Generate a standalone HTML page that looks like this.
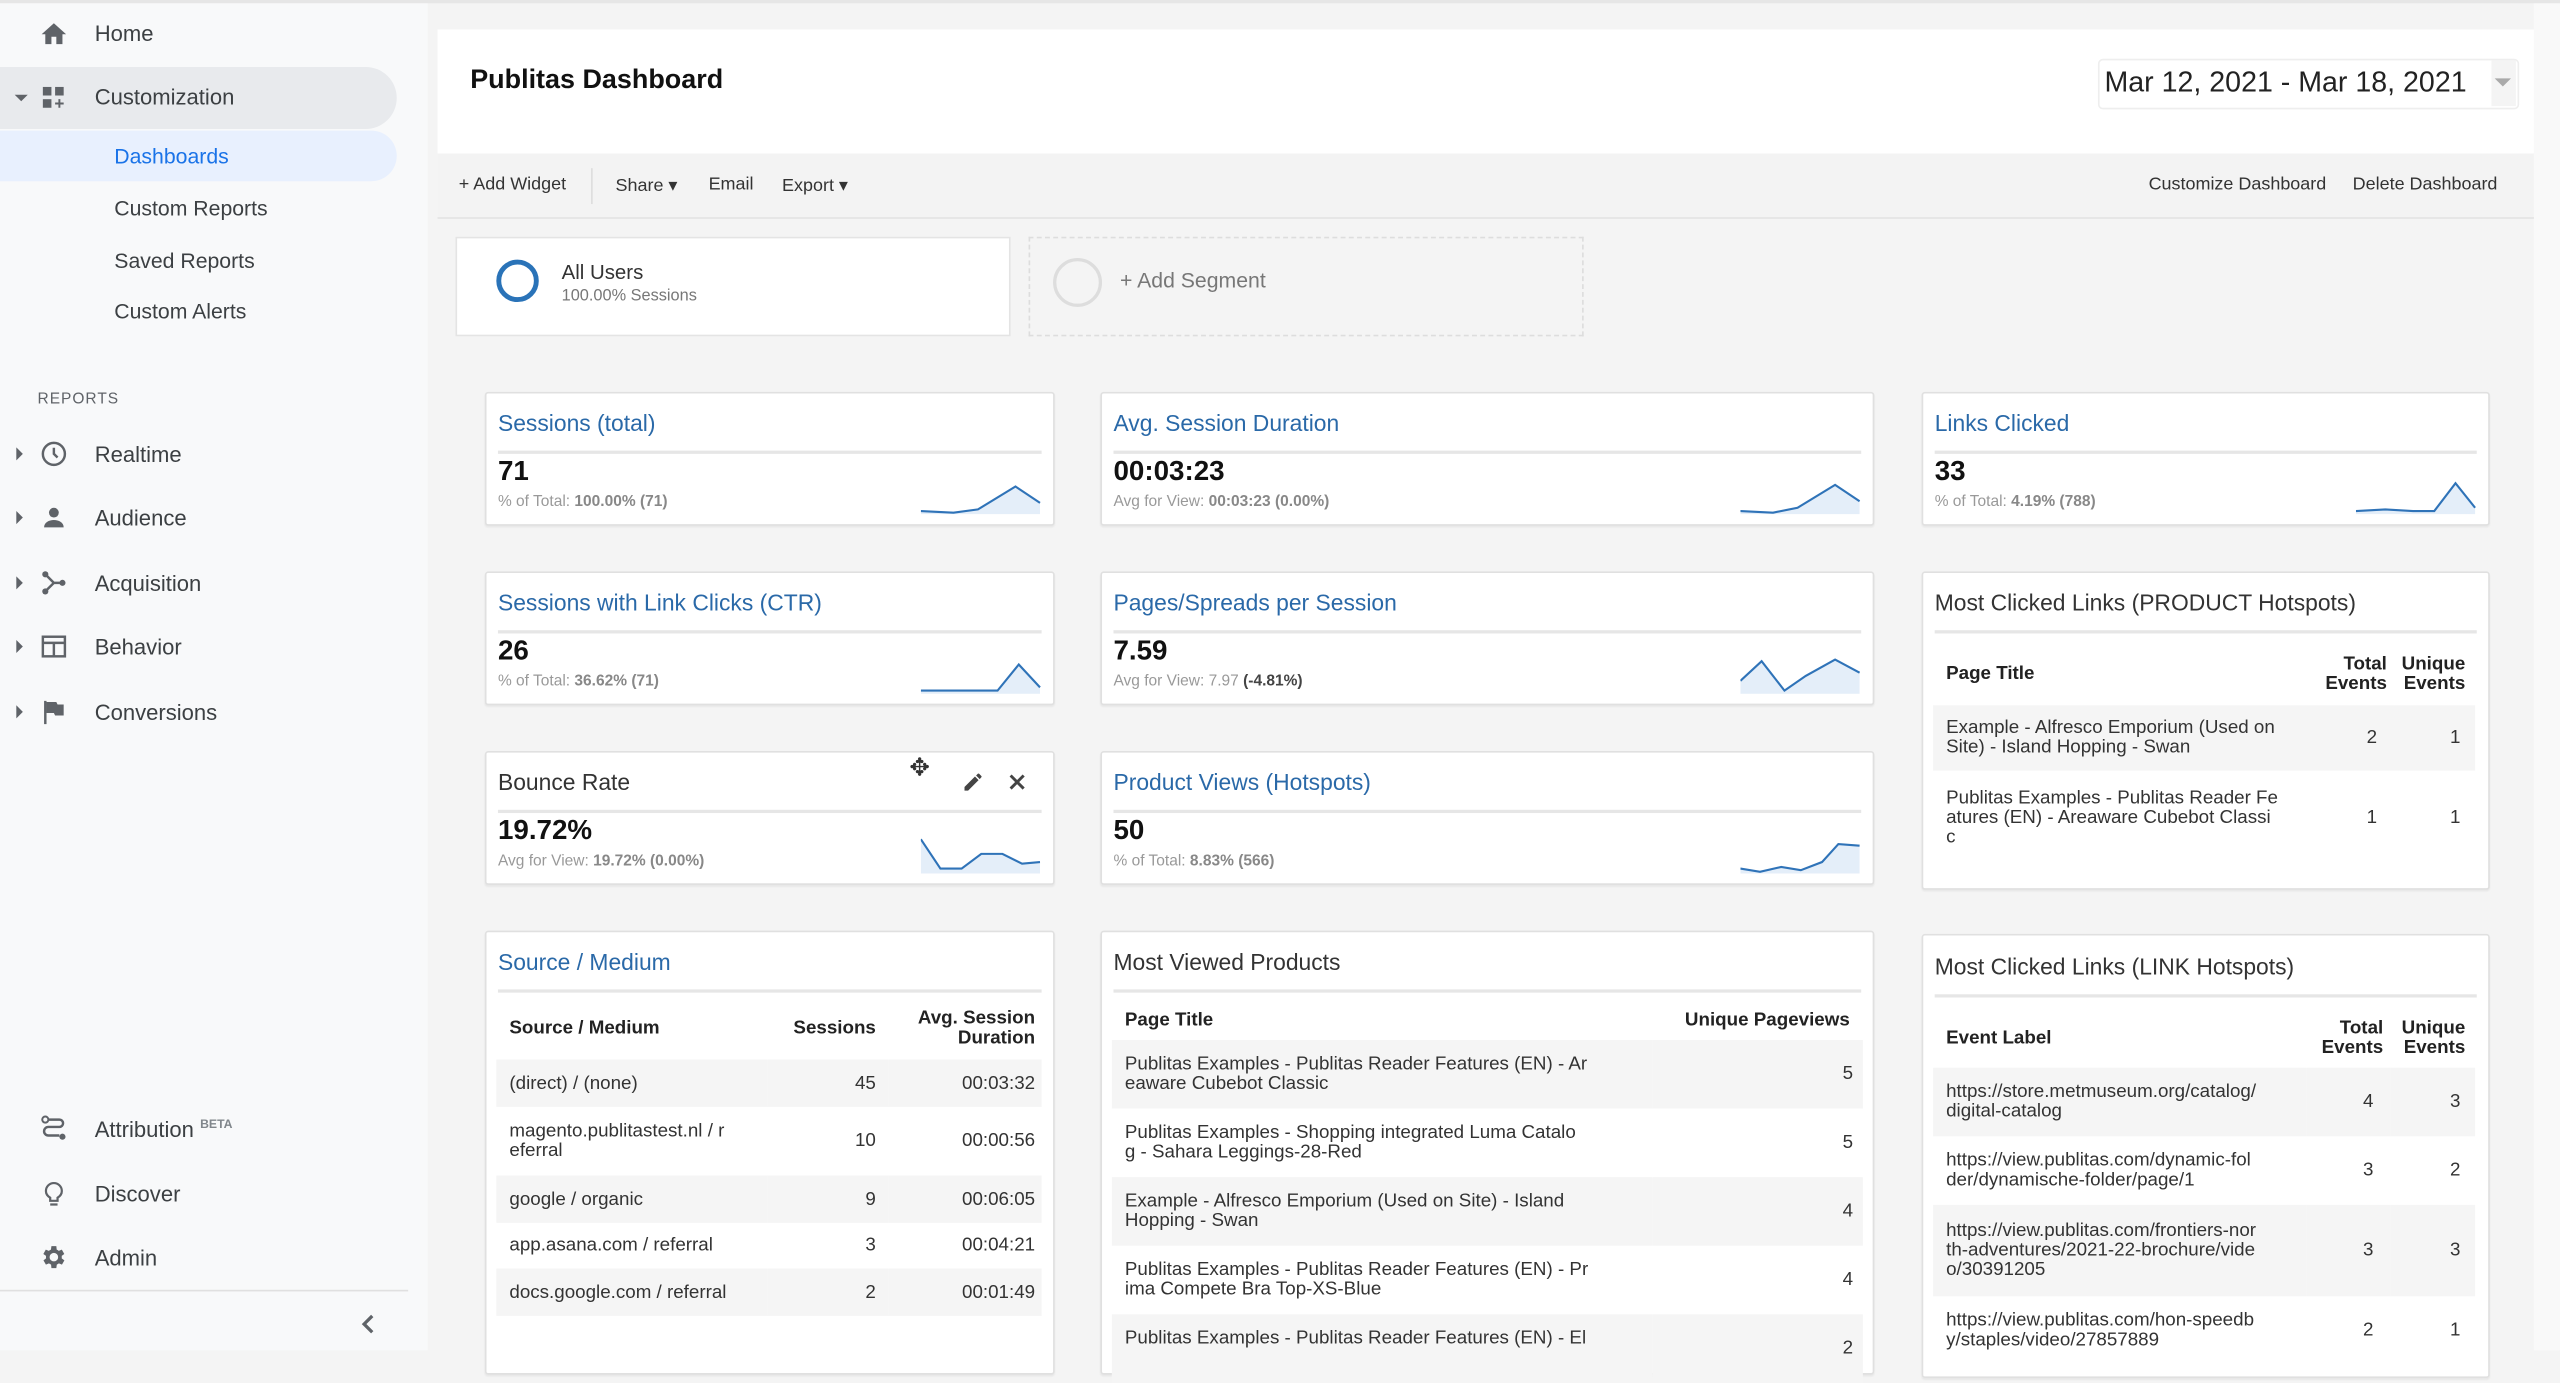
<!DOCTYPE html>
<html><head><meta charset="utf-8"><style>
html,body{margin:0;padding:0;width:2560px;height:1350px;overflow:hidden;background:#f4f4f4;font-family:"Liberation Sans",Arial,sans-serif;}
#w{position:absolute;left:0;top:0;width:1568px;height:827px;transform:scale(1.63265);transform-origin:0 0;background:#f4f4f4;}
.a{position:absolute;white-space:nowrap;}
#side{position:absolute;left:0;top:0;width:262px;height:827px;background:#f8f9fa;}
.nav{position:absolute;left:58px;font-size:13.5px;color:#3c4043;}
.sub{position:absolute;left:70px;font-size:13px;color:#3c4043;}
.ic{position:absolute;left:24px;width:18px;height:18px;}
.tri{position:absolute;left:10px;width:0;height:0;border-top:4px solid transparent;border-bottom:4px solid transparent;border-left:4px solid #5f6368;}
.card{position:absolute;background:#fff;border:1px solid #e0e0e0;border-radius:2px;box-shadow:0 1px 1px rgba(0,0,0,.05);}
.ct{position:absolute;left:7px;top:10px;font-size:14px;color:#2a69a8;}
.ctb{color:#333;}
.hr{position:absolute;left:7px;right:7px;top:35px;height:2px;background:#e6e6e6;}
.val{position:absolute;left:7px;top:38px;font-size:17px;font-weight:bold;color:#111;}
.sm{position:absolute;left:7px;top:61px;font-size:9.5px;color:#999;}
.sm b{color:#888;}
.spark{position:absolute;right:7px;bottom:6px;}
table{border-collapse:collapse;font-size:11.5px;color:#333;}
td,th{padding:0 8px;}
th{font-weight:bold;color:#222;font-size:11.5px;}
tr.g{background:#f5f5f5;}
.tb{position:absolute;font-size:11px;color:#333;top:107px;}
</style></head><body><div id="w">
<div id="side">
 <svg class="ic" style="top:12px" viewBox="0 0 24 24"><path d="M10 20v-6h4v6h5v-8h3L12 3 2 12h3v8z" fill="#5f6368"/></svg>
 <div class="nav" style="top:13px">Home</div>
 <div class="a" style="left:0;top:41px;width:243px;height:38px;background:#e8eaed;border-radius:0 19px 19px 0"></div>
 <div class="a" style="left:9px;top:58px;border-left:4px solid transparent;border-right:4px solid transparent;border-top:4px solid #5f6368"></div>
 <svg class="ic" style="top:51px" viewBox="0 0 24 24"><rect x="3" y="3" width="7" height="7" fill="#5f6368"/><rect x="13" y="3" width="7" height="7" fill="#5f6368"/><rect x="3" y="13" width="7" height="7" fill="#5f6368"/><path d="M16.5 13v7M13 16.5h7" stroke="#5f6368" stroke-width="1.6"/></svg>
 <div class="nav" style="top:52px">Customization</div>
 <div class="a" style="left:0;top:80px;width:243px;height:31px;background:#e8f0fe;border-radius:0 16px 16px 0"></div>
 <div class="sub" style="top:88px;color:#1a73e8">Dashboards</div>
 <div class="sub" style="top:120px">Custom Reports</div>
 <div class="sub" style="top:152px">Saved Reports</div>
 <div class="sub" style="top:183px">Custom Alerts</div>
 <div class="a" style="left:23px;top:239px;font-size:9.5px;color:#5f6368;letter-spacing:.6px">REPORTS</div>
 <div class="tri" style="top:274px"></div>
 <svg class="ic" style="top:269px" viewBox="0 0 24 24"><circle cx="12" cy="12" r="9" fill="none" stroke="#5f6368" stroke-width="2"/><path d="M12 7v5l3 3" stroke="#5f6368" stroke-width="2" fill="none"/></svg>
 <div class="nav" style="top:271px">Realtime</div>
 <div class="tri" style="top:313px"></div>
 <svg class="ic" style="top:308px" viewBox="0 0 24 24"><circle cx="12" cy="8" r="4" fill="#5f6368"/><path d="M4 20c0-4 4-6 8-6s8 2 8 6z" fill="#5f6368"/></svg>
 <div class="nav" style="top:310px">Audience</div>
 <div class="tri" style="top:353px"></div>
 <svg class="ic" style="top:348px" viewBox="0 0 24 24"><circle cx="5" cy="5" r="2.5" fill="#5f6368"/><circle cx="5" cy="19" r="2.5" fill="#5f6368"/><circle cx="19" cy="12" r="2.5" fill="#5f6368"/><path d="M5 5l7 7h7M5 19l7-7" stroke="#5f6368" stroke-width="2" fill="none"/></svg>
 <div class="nav" style="top:350px">Acquisition</div>
 <div class="tri" style="top:392px"></div>
 <svg class="ic" style="top:387px" viewBox="0 0 24 24"><rect x="3" y="4" width="18" height="16" fill="none" stroke="#5f6368" stroke-width="2"/><path d="M3 9h18M12 9v11" stroke="#5f6368" stroke-width="2"/></svg>
 <div class="nav" style="top:389px">Behavior</div>
 <div class="tri" style="top:432px"></div>
 <svg class="ic" style="top:427px" viewBox="0 0 24 24"><path d="M5 3v19" stroke="#5f6368" stroke-width="2"/><path d="M6 4h8l1 2h5v9h-7l-1-2H6z" fill="#5f6368"/></svg>
 <div class="nav" style="top:429px">Conversions</div>
 <svg class="ic" style="top:682px" viewBox="0 0 24 24"><circle cx="5" cy="5" r="2.5" fill="none" stroke="#5f6368" stroke-width="1.6"/><circle cx="19" cy="19" r="2.5" fill="#5f6368"/><path d="M7.5 5h9a3 3 0 0 1 0 6h-9a3.5 3.5 0 0 0 0 7h9" fill="none" stroke="#5f6368" stroke-width="2"/></svg>
 <div class="nav" style="top:684px">Attribution <sup style="font-size:7.5px;color:#80868b;font-weight:bold">BETA</sup></div>
 <svg class="ic" style="top:722px" viewBox="0 0 24 24"><path d="M9 21h6M9 18h6v-2.5c2-1.2 3.5-3.2 3.5-5.5a6.5 6.5 0 0 0-13 0c0 2.3 1.5 4.3 3.5 5.5z" fill="none" stroke="#5f6368" stroke-width="1.8"/></svg>
 <div class="nav" style="top:724px">Discover</div>
 <svg class="ic" style="top:761px" viewBox="0 0 24 24"><path d="M19.4 13a7.5 7.5 0 0 0 0-2l2.1-1.6-2-3.5-2.5 1a7 7 0 0 0-1.7-1L15 3h-4l-.4 2.9a7 7 0 0 0-1.7 1l-2.5-1-2 3.5L6.6 11a7.5 7.5 0 0 0 0 2l-2.1 1.6 2 3.5 2.5-1a7 7 0 0 0 1.7 1L11 21h4l.4-2.9a7 7 0 0 0 1.7-1l2.5 1 2-3.5zM13 15.5a3.5 3.5 0 1 1 0-7 3.5 3.5 0 0 1 0 7z" fill="#5f6368" transform="translate(-1 0)"/></svg>
 <div class="nav" style="top:763px">Admin</div>
 <div class="a" style="left:0;top:790px;width:250px;height:1px;background:#e0e0e0"></div>
 <svg class="a" style="left:219px;top:804px" width="12" height="14" viewBox="0 0 12 14"><path d="M9 2L4 7l5 5" stroke="#5f6368" stroke-width="2" fill="none"/></svg>
</div>
<div class="a" style="left:1552px;top:0;width:16px;height:827px;background:#f9f9f9"></div>
<div class="a" style="left:0;top:0;width:1568px;height:2px;background:#e6e6e6"></div>
<div class="a" style="left:268px;top:18px;width:1284px;height:76px;background:#fff"></div>
<div class="a" style="left:288px;top:40px;font-size:16.5px;font-weight:bold;color:#111">Publitas Dashboard</div>
<div class="a" style="left:1285px;top:36px;width:256px;height:29px;border:1px solid #eee;border-radius:3px;background:#fff"></div>
<div class="a" style="left:1289px;top:40px;font-size:17.5px;color:#222">Mar 12, 2021 - Mar 18, 2021</div>
<div class="a" style="left:1526px;top:37px;width:15px;height:28px;background:#f4f4f4"></div>
<div class="a" style="left:1528px;top:48px;border-left:5px solid transparent;border-right:5px solid transparent;border-top:5px solid #aaa"></div>
<div class="a" style="left:268px;top:94px;width:1284px;height:39px;background:#f3f3f3;border-bottom:1px solid #e3e3e3"></div>
<div class="tb" style="left:281px">+ Add Widget</div>
<div class="a" style="left:362px;top:103px;width:1px;height:22px;background:#ddd"></div>
<div class="tb" style="left:377px">Share ▾</div>
<div class="tb" style="left:434px">Email</div>
<div class="tb" style="left:479px">Export ▾</div>
<div class="tb" style="left:1316px">Customize Dashboard</div>
<div class="tb" style="left:1441px">Delete Dashboard</div>
<div class="a" style="left:279px;top:145px;width:338px;height:59px;background:#fff;border:1px solid #e4e4e4"></div>
<div class="a" style="left:304px;top:159px;width:26px;height:26px;border:3px solid #2a73b8;border-radius:50%;box-sizing:border-box"></div>
<div class="a" style="left:344px;top:160px;font-size:12.5px;color:#333">All Users</div>
<div class="a" style="left:344px;top:176px;font-size:10px;color:#777">100.00% Sessions</div>
<div class="a" style="left:630px;top:145px;width:338px;height:59px;border:1px dashed #ddd"></div>
<div class="a" style="left:645px;top:158px;width:30px;height:30px;border:2px solid #ddd;border-radius:50%;box-sizing:border-box"></div>
<div class="a" style="left:686px;top:164px;font-size:13px;color:#777">+ Add Segment</div>

<div class="card" style="left:297px;top:240px;width:347px;height:80px">
 <div class="ct">Sessions (total)</div><div class="hr"></div><div class="val">71</div>
 <div class="sm">% of Total: <b>100.00% (71)</b></div>
 <svg class="spark" width="74" height="24"><polygon points="0,22 20,23 35,21 58,7 73,17 73,24 0,24" fill="#e4eef9"/><polyline points="0,22 20,23 35,21 58,7 73,17" fill="none" stroke="#2f73b8" stroke-width="1.3"/></svg>
</div>
<div class="card" style="left:674px;top:240px;width:472px;height:80px">
 <div class="ct">Avg. Session Duration</div><div class="hr"></div><div class="val">00:03:23</div>
 <div class="sm">Avg for View: <b>00:03:23 (0.00%)</b></div>
 <svg class="spark" width="74" height="24"><polygon points="0,22 20,23 35,20 58,6 73,16 73,24 0,24" fill="#e4eef9"/><polyline points="0,22 20,23 35,20 58,6 73,16" fill="none" stroke="#2f73b8" stroke-width="1.3"/></svg>
</div>
<div class="card" style="left:1177px;top:240px;width:346px;height:80px">
 <div class="ct">Links Clicked</div><div class="hr"></div><div class="val">33</div>
 <div class="sm">% of Total: <b>4.19% (788)</b></div>
 <svg class="spark" width="74" height="24"><polygon points="0,22 18,21 35,22 48,22 61,5 73,20 73,24 0,24" fill="#e4eef9"/><polyline points="0,22 18,21 35,22 48,22 61,5 73,20" fill="none" stroke="#2f73b8" stroke-width="1.3"/></svg>
</div>
<div class="card" style="left:297px;top:350px;width:347px;height:80px">
 <div class="ct">Sessions with Link Clicks (CTR)</div><div class="hr"></div><div class="val">26</div>
 <div class="sm">% of Total: <b>36.62% (71)</b></div>
 <svg class="spark" width="74" height="24"><polygon points="0,22 20,22 40,22 47,22 60,6 73,20 73,24 0,24" fill="#e4eef9"/><polyline points="0,22 20,22 40,22 47,22 60,6 73,20" fill="none" stroke="#2f73b8" stroke-width="1.3"/></svg>
</div>
<div class="card" style="left:674px;top:350px;width:472px;height:80px">
 <div class="ct">Pages/Spreads per Session</div><div class="hr"></div><div class="val">7.59</div>
 <div class="sm">Avg for View: 7.97 <b style="color:#444">(-4.81%)</b></div>
 <svg class="spark" width="74" height="24"><polygon points="0,16 13,4 27,22 40,13 58,3 73,11 73,24 0,24" fill="#e4eef9"/><polyline points="0,16 13,4 27,22 40,13 58,3 73,11" fill="none" stroke="#2f73b8" stroke-width="1.3"/></svg>
</div>
<div class="card" style="left:297px;top:460px;width:347px;height:80px">
 <div class="ct ctb">Bounce Rate</div><div class="hr"></div><div class="val">19.72%</div>
 <div class="sm">Avg for View: <b>19.72% (0.00%)</b></div>
 <div class="a" style="left:259px;top:0px;font-size:15px;color:#333">✥</div>
 <svg class="a" style="left:291px;top:11px" width="14" height="14" viewBox="0 0 24 24"><path d="M3 17.2V21h3.8L17.8 10l-3.8-3.8zM20.7 7c.4-.4.4-1 0-1.4l-2.3-2.3c-.4-.4-1-.4-1.4 0l-1.8 1.8 3.8 3.8z" fill="#444"/></svg>
 <svg class="a" style="left:319px;top:12px" width="12" height="12" viewBox="0 0 12 12"><path d="M2 2l8 8M10 2l-8 8" stroke="#444" stroke-width="1.8"/></svg>
 <svg class="spark" width="74" height="24"><polygon points="0,3 12,21 25,21 37,12 50,12 62,18 73,17 73,24 0,24" fill="#e4eef9"/><polyline points="0,3 12,21 25,21 37,12 50,12 62,18 73,17" fill="none" stroke="#2f73b8" stroke-width="1.3"/></svg>
</div>
<div class="card" style="left:674px;top:460px;width:472px;height:80px">
 <div class="ct">Product Views (Hotspots)</div><div class="hr"></div><div class="val">50</div>
 <div class="sm">% of Total: <b>8.83% (566)</b></div>
 <svg class="spark" width="74" height="24"><polygon points="0,21 12,23 25,20 37,22 50,17 60,6 73,7 73,24 0,24" fill="#e4eef9"/><polyline points="0,21 12,23 25,20 37,22 50,17 60,6 73,7" fill="none" stroke="#2f73b8" stroke-width="1.3"/></svg>
</div>

<div class="card" style="left:1177px;top:350px;width:346px;height:193px">
 <div class="ct ctb">Most Clicked Links (PRODUCT Hotspots)</div><div class="hr"></div>
 <table class="a" style="left:6px;top:43px;width:332px">
  <tr style="height:38px"><th style="text-align:left">Page Title</th><th style="text-align:right;padding:0 4px">Total<br>Events</th><th style="text-align:right;padding:0 6px 0 2px">Unique<br>Events</th></tr>
  <tr class="g" style="height:40px"><td>Example - Alfresco Emporium (Used on<br>Site) - Island Hopping - Swan</td><td style="text-align:right;padding-right:10px">2</td><td style="text-align:right;padding-right:9px">1</td></tr>
  <tr style="height:58px"><td>Publitas Examples - Publitas Reader Fe<br>atures (EN) - Areaware Cubebot Classi<br>c</td><td style="text-align:right;padding-right:10px">1</td><td style="text-align:right;padding-right:9px">1</td></tr>
 </table>
</div>

<div class="card" style="left:297px;top:570px;width:347px;height:270px">
 <div class="ct">Source / Medium</div><div class="hr"></div>
 <table class="a" style="left:6px;top:40px;width:334px">
  <tr style="height:38px"><th style="text-align:left">Source / Medium</th><th style="text-align:right">Sessions</th><th style="text-align:right;padding-right:4px">Avg. Session<br>Duration</th></tr>
  <tr class="g" style="height:29px"><td>(direct) / (none)</td><td style="text-align:right">45</td><td style="text-align:right;padding-right:4px">00:03:32</td></tr>
  <tr style="height:42px"><td>magento.publitastest.nl / r<br>eferral</td><td style="text-align:right">10</td><td style="text-align:right;padding-right:4px">00:00:56</td></tr>
  <tr class="g" style="height:29px"><td>google / organic</td><td style="text-align:right">9</td><td style="text-align:right;padding-right:4px">00:06:05</td></tr>
  <tr style="height:28px"><td>app.asana.com / referral</td><td style="text-align:right">3</td><td style="text-align:right;padding-right:4px">00:04:21</td></tr>
  <tr class="g" style="height:29px"><td>docs.google.com / referral</td><td style="text-align:right">2</td><td style="text-align:right;padding-right:4px">00:01:49</td></tr>
 </table>
</div>

<div class="card" style="left:674px;top:570px;width:472px;height:270px">
 <div class="ct ctb">Most Viewed Products</div><div class="hr"></div>
 <table class="a" style="left:6px;top:42px;width:460px">
  <tr style="height:24px"><th style="text-align:left">Page Title</th><th style="text-align:right">Unique Pageviews</th></tr>
  <tr class="g" style="height:42px"><td>Publitas Examples - Publitas Reader Features (EN) - Ar<br>eaware Cubebot Classic</td><td style="text-align:right;padding-right:6px">5</td></tr>
  <tr style="height:42px"><td>Publitas Examples - Shopping integrated Luma Catalo<br>g - Sahara Leggings-28-Red</td><td style="text-align:right;padding-right:6px">5</td></tr>
  <tr class="g" style="height:42px"><td>Example - Alfresco Emporium (Used on Site) - Island<br>Hopping - Swan</td><td style="text-align:right;padding-right:6px">4</td></tr>
  <tr style="height:42px"><td>Publitas Examples - Publitas Reader Features (EN) - Pr<br>ima Compete Bra Top-XS-Blue</td><td style="text-align:right;padding-right:6px">4</td></tr>
  <tr class="g" style="height:42px"><td>Publitas Examples - Publitas Reader Features (EN) - El<br>&nbsp;</td><td style="text-align:right;padding-right:6px">2</td></tr>
 </table>
</div>

<div class="card" style="left:1177px;top:572px;width:346px;height:270px">
 <div class="ct ctb" style="top:11px">Most Clicked Links (LINK Hotspots)</div><div class="hr" style="top:36px"></div>
 <table class="a" style="left:6px;top:44px;width:332px">
  <tr style="height:37px"><th style="text-align:left">Event Label</th><th style="text-align:right;padding:0 4px">Total<br>Events</th><th style="text-align:right;padding:0 6px 0 2px">Unique<br>Events</th></tr>
  <tr class="g" style="height:42px"><td>https://store.metmuseum.org/catalog/<br>digital-catalog</td><td style="text-align:right;padding-right:10px">4</td><td style="text-align:right;padding-right:9px">3</td></tr>
  <tr style="height:42px"><td>https://view.publitas.com/dynamic-fol<br>der/dynamische-folder/page/1</td><td style="text-align:right;padding-right:10px">3</td><td style="text-align:right;padding-right:9px">2</td></tr>
  <tr class="g" style="height:56px"><td>https://view.publitas.com/frontiers-nor<br>th-adventures/2021-22-brochure/vide<br>o/30391205</td><td style="text-align:right;padding-right:10px">3</td><td style="text-align:right;padding-right:9px">3</td></tr>
  <tr style="height:42px"><td>https://view.publitas.com/hon-speedb<br>y/staples/video/27857889</td><td style="text-align:right;padding-right:10px">2</td><td style="text-align:right;padding-right:9px">1</td></tr>
 </table>
</div>
</div></body></html>
